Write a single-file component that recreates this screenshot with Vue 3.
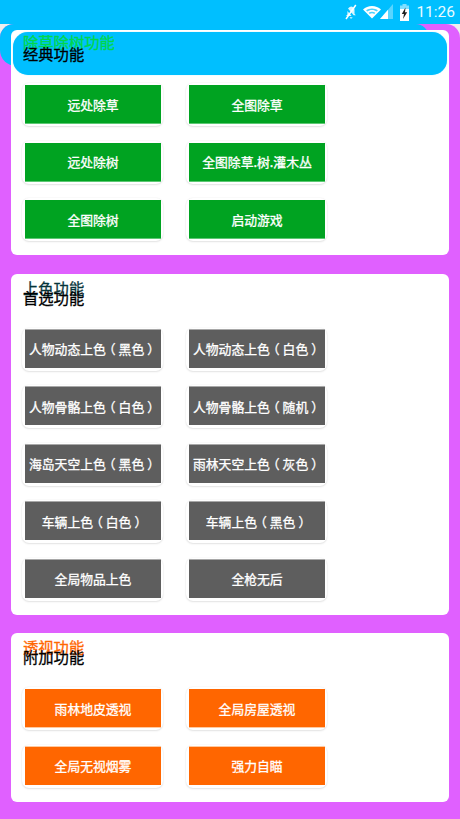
<script setup>
const sections = [
  {
    key: 'weed',
    tone: 'green',
    over: '除草除树功能',
    title: '经典功能',
    buttons: ['远处除草', '全图除草', '远处除树', '全图除草.树.灌木丛', '全图除树', '启动游戏'],
  },
  {
    key: 'color',
    tone: 'gray',
    over: '上色功能',
    title: '首选功能',
    buttons: [
      '人物动态上色（黑色）',
      '人物动态上色（白色）',
      '人物骨骼上色（白色）',
      '人物骨骼上色（随机）',
      '海岛天空上色（黑色）',
      '雨林天空上色（灰色）',
      '车辆上色（白色）',
      '车辆上色（黑色）',
      '全局物品上色',
      '全枪无后',
    ],
  },
  {
    key: 'xray',
    tone: 'orange',
    over: '透视功能',
    title: '附加功能',
    buttons: ['雨林地皮透视', '全局房屋透视', '全局无视烟雾', '强力自瞄'],
  },
]

const parts = (label) => label.split(/([（）])/).filter(Boolean)
const partClass = (p) => (p === '（' ? 'open' : p === '）' ? 'close' : '')
</script>

<template>
  <div class="screen">
    <header class="status">
      <svg class="ic-mute" viewBox="0 0 12 16" width="12" height="16">
        <path d="M6.500 2.500c1.800.4 3 1.800 3 3.600v3.600l1.300 1.600H8.600L3 4.600c.6-1 1.900-1.900 3.500-2.100z" fill="#fff" opacity=".85" />
        <path d="M2.400 7v3.400L1 12h5.600z" fill="#fff" opacity=".85" />
        <path d="M4.700 13.200h2.800c-.2.8-.7 1.300-1.400 1.300s-1.200-.5-1.400-1.300z" fill="#fff" opacity=".85" />
        <path d="M1 15 10.800 1" stroke="#fff" stroke-width="1.500" fill="none" />
      </svg>
      <svg class="ic-wifi" viewBox="0 0 18 13" width="18" height="13">
        <path d="M9 12.600 0 3.400C2.400 1.300 5.500 0 9 0s6.600 1.300 9 3.400z" fill="#fff" />
        <path d="M3.100 4.300C4.700 3.100 6.700 2.400 9 2.400s4.300.7 5.900 1.900l-1.200 1.200C12.400 4.600 10.800 4 9 4s-3.400.6-4.700 1.500z" fill="#00bfff" opacity=".7" />
        <path d="M5.600 6.800C6.600 6.100 7.700 5.800 9 5.800s2.400.3 3.400 1l-1.100 1.100c-.7-.4-1.400-.6-2.300-.6s-1.600.2-2.300.6z" fill="#00bfff" opacity=".7" />
      </svg>
      <svg class="ic-signal" viewBox="0 0 13 15" width="13" height="15">
        <path d="M0 15 13 0v15z" fill="#fff" opacity=".35" />
        <path d="M0 15 8 5.800V15z" fill="#fff" />
      </svg>
      <svg class="ic-batt" viewBox="0 0 9 17" width="9" height="17">
        <path d="M2.500 0h4v1.500H9V17H0V1.500h2.500z" fill="#fff" opacity=".5" />
        <path d="M0 5h9v12H0z" fill="#fff" />
        <path d="M5.500 3.500 1.800 10h2.200l-1 5L7.200 8.300H5z" fill="#222" />
      </svg>
      <span class="clock">11:26</span>
    </header>

    <main class="stage">
      <div class="panel">
        <div class="band"></div>
        <section
          v-for="s in sections"
          :key="s.key"
          class="card"
          :class="'card-' + s.key"
        >
          <div class="head">
            <div v-if="s.key === 'weed'" class="pill"></div>
            <span class="over" :class="'over-' + s.tone">{{ s.over }}</span>
            <span class="title">{{ s.title }}</span>
          </div>
          <div class="grid">
            <div v-for="b in s.buttons" :key="b" class="shell">
              <button class="btn" :class="'btn-' + s.tone" type="button"><span
                v-for="(p, i) in parts(b)"
                :key="i"
                :class="partClass(p)"
              >{{ p }}</span></button>
            </div>
          </div>
        </section>
      </div>
    </main>
  </div>
</template>

<style>
html, body { margin: 0; background: #eeeeee; }
</style>

<style scoped>
.screen {
  width: 460px;
  height: 819px;
  overflow: hidden;
  display: flex;
  flex-direction: column;
  font-family: "Noto Sans CJK SC", "Noto Sans", sans-serif;
}
.status {
  height: 24px;
  flex: none;
  background: #00bfff;
  display: flex;
  align-items: center;
  justify-content: flex-end;
  padding-right: 5px;
  box-sizing: border-box;
}
.ic-mute { margin-right: 6px; }
.ic-wifi { margin-right: -1px; }
.ic-signal { margin-right: 7px; margin-top: -1px; }
.ic-batt { margin-right: 7px; }
.clock {
  font-family: Roboto, sans-serif;
  font-size: 15.5px;
  color: #e8fbff;
}
.stage {
  flex: 1;
  background: #eeeeee;
}
.panel {
  position: relative;
  height: 100%;
  box-sizing: border-box;
  background: #e060ff;
  border-radius: 14px 14px 0 0;
  padding: 6px 11px 0;
  display: flex;
  flex-direction: column;
  gap: 18.5px;
}
.band {
  position: absolute;
  left: 0;
  top: 0;
  width: 428px;
  height: 42px;
  background: #00bfff;
  border-radius: 14px 12px 0 16px;
}
.card {
  position: relative;
  background: #fff;
  border-radius: 6px;
  padding: 0 0 14px 11px;
}
.head {
  position: relative;
  height: 54px;
  display: grid;
  grid-template-areas: "t";
  align-items: start;
  justify-items: start;
}
.card-weed .head { height: 53px; }
.over, .title {
  grid-area: t;
  position: relative;
  font-size: 15.3px;
  font-weight: 400;
  -webkit-text-stroke: 0.3px currentColor;
  line-height: 20px;
  margin-left: 1px;
}
.title { color: #000; margin-top: 13px; }
.over { margin-top: 3px; }
.over-green { color: #00d84a; margin-top: 1px; }
.over-gray { color: #06343a; }
.over-orange { color: #ff6600; }
.pill {
  position: absolute;
  left: -9px;
  top: 2px;
  width: 434px;
  height: 43px;
  border-radius: 15px;
  background: #00bfff;
  box-shadow: 0 0 1px #7fdfff;
}
.grid {
  display: grid;
  grid-template-columns: repeat(2, 141px);
  column-gap: 23px;
  row-gap: 14.5px;
}
.shell {
  height: 43px;
  box-sizing: border-box;
  padding: 2px 2px 3px 3px;
  background: #fff;
  border-radius: 7px;
  box-shadow: 0 0 2px rgba(0, 0, 0, 0.07), 0 1px 2px rgba(0, 0, 0, 0.1);
}
.btn {
  display: block;
  width: 136px;
  height: 38px;
  margin: 0;
  padding: 0;
  border: 0;
  font-family: inherit;
  font-size: 12.8px;
  font-weight: 400;
  -webkit-text-stroke: 0.3px currentColor;
  color: #fff;
  white-space: nowrap;
}
.open, .close { display: inline-block; }
.open { transform: translateX(-3px); }
.close { transform: translateX(3px); }
.btn-green { background: #00a321; box-shadow: 0 1px 0 #5cc873; }
.btn-gray { background: #5e5e5e; box-shadow: 0 -1px 0 #a8a8a8; }
.btn-orange { background: #ff6600; box-shadow: 0 -1px 0 #ffc9a0; }
.shell:nth-child(-n + 2) .btn-orange { box-shadow: 0 1px 0 #ffc9a0; }
</style>
